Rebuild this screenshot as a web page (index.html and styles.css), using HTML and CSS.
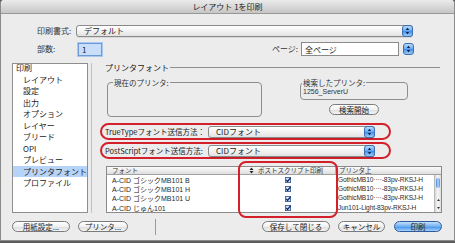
FILE: index.html
```html
<!DOCTYPE html>
<html lang="ja">

<head>
  <meta charset="UTF-8" />
  <title>レイアウト 1を印刷</title>
  <link rel="stylesheet" href="styles.css">
</head>

<body>
  <div class="window">
    <div class="titlebar">レイアウト 1を印刷</div>

    <div class="format-row">
      <span class="label">印刷書式:</span>
      <div class="popup popup-format">
        <span>デフォルト</span>
        <span class="stepper">
          <svg width="11" height="12" viewBox="0 0 11 12"><path d="M3.8 5L7.2 5L5.5 2.8Z M3.8 7L7.2 7L5.5 9.2Z" fill="#102050" /></svg>
        </span>
      </div>
    </div>

    <div class="copies-row">
      <span class="label">部数:</span>
      <div class="copies">1</div>
      <span class="page-label">ページ:</span>
      <div class="page-field">全ページ</div>
      <span class="stepper">
        <svg width="11" height="12" viewBox="0 0 11 12"><path d="M3.8 5L7.2 5L5.5 2.8Z M3.8 7L7.2 7L5.5 9.2Z" fill="#102050" /></svg>
      </span>
    </div>

    <div class="main">
      <div class="sidebar">
        <ul class="nav">
          <li class="nav-parent">印刷</li>
          <li>レイアウト</li>
          <li>設定</li>
          <li>出力</li>
          <li>オプション</li>
          <li>レイヤー</li>
          <li>ブリード</li>
          <li>OPI</li>
          <li>プレビュー</li>
          <li class="selected">プリンタフォント</li>
          <li>プロファイル</li>
        </ul>
      </div>
      <div class="divider"></div>

      <div class="panel">
        <div class="section-title">
          <span>プリンタフォント</span>
          <span class="rule"></span>
        </div>

        <div class="groups">
          <fieldset class="group group-current">
            <legend>現在のプリンタ:</legend>
          </fieldset>
          <div class="search">
            <fieldset class="group group-found">
              <legend>検索したプリンタ:</legend>
              <div class="found-name">1256_ServerU</div>
            </fieldset>
            <div class="button search-button">検索開始</div>
          </div>
        </div>

        <div class="send-row">
          <span class="send-label">TrueTypeフォント送信方法：</span>
          <div class="popup popup-send">
            <span>CIDフォント</span>
            <span class="stepper">
              <svg width="11" height="12" viewBox="0 0 11 12"><path d="M3.8 5L7.2 5L5.5 2.8Z M3.8 7L7.2 7L5.5 9.2Z" fill="#102050" /></svg>
            </span>
          </div>
        </div>
        <div class="send-row">
          <span class="send-label">PostScriptフォント送信方法:</span>
          <div class="popup popup-send">
            <span>CIDフォント</span>
            <span class="stepper">
              <svg width="11" height="12" viewBox="0 0 11 12"><path d="M3.8 5L7.2 5L5.5 2.8Z M3.8 7L7.2 7L5.5 9.2Z" fill="#102050" /></svg>
            </span>
          </div>
        </div>

        <div class="font-table">
          <div class="table-head">
            <div class="th">フォント</div>
            <div class="th th-check">
              <svg width="5" height="7" viewBox="0 0 5 7"><path d="M0.5 3L4.5 3L2.5 0.5Z M0.5 4L4.5 4L2.5 6.5Z" fill="#222" /></svg>
              ポストスクリプト印刷
            </div>
            <div class="th">プリンタ上</div>
          </div>
          <div class="table-body">
            <div class="rows">
              <div class="td">A-CID ゴシックMB101 B</div>
              <div class="td td-check"><span class="check"><svg width="6" height="6" viewBox="0 0 7 7"><rect x="0.5" y="0.5" width="6" height="6" fill="#cfe1f7" stroke="#3a5c94" /><path d="M1.5 3.3L3 5.2L6.4 0.9" fill="none" stroke="#0b2560" stroke-width="1.4" /></svg></span></div>
              <div class="td td-printer">GothicMB10····-83pv-RKSJ-H</div>

              <div class="td">A-CID ゴシックMB101 H</div>
              <div class="td td-check"><span class="check"><svg width="6" height="6" viewBox="0 0 7 7"><rect x="0.5" y="0.5" width="6" height="6" fill="#cfe1f7" stroke="#3a5c94" /><path d="M1.5 3.3L3 5.2L6.4 0.9" fill="none" stroke="#0b2560" stroke-width="1.4" /></svg></span></div>
              <div class="td td-printer">GothicMB10····-83pv-RKSJ-H</div>

              <div class="td">A-CID ゴシックMB101 U</div>
              <div class="td td-check"><span class="check"><svg width="6" height="6" viewBox="0 0 7 7"><rect x="0.5" y="0.5" width="6" height="6" fill="#cfe1f7" stroke="#3a5c94" /><path d="M1.5 3.3L3 5.2L6.4 0.9" fill="none" stroke="#0b2560" stroke-width="1.4" /></svg></span></div>
              <div class="td td-printer">GothicMB10····-83pv-RKSJ-H</div>

              <div class="td">A-CID じゅん101</div>
              <div class="td td-check"><span class="check"><svg width="6" height="6" viewBox="0 0 7 7"><rect x="0.5" y="0.5" width="6" height="6" fill="#cfe1f7" stroke="#3a5c94" /><path d="M1.5 3.3L3 5.2L6.4 0.9" fill="none" stroke="#0b2560" stroke-width="1.4" /></svg></span></div>
              <div class="td td-printer">Jun101-Light-83pv-RKSJ-H</div>
            </div>
            <div class="scrollbar">
              <div class="thumb"></div>
              <div class="arrows">
                <svg width="5" height="14" viewBox="0 0 5 14"><path d="M1 4L4 4L2.5 2Z M1 10L4 10L2.5 12Z" fill="#333" /></svg>
              </div>
            </div>
          </div>
          <div class="highlight"></div>
        </div>
      </div>
    </div>

    <div class="footer">
      <div class="button btn-paper">用紙設定...</div>
      <div class="button btn-printer">プリンタ...</div>
      <div class="footer-sep"></div>
      <div class="button btn-save">保存して閉じる</div>
      <div class="button btn-cancel">キャンセル</div>
      <div class="button btn-print">印刷</div>
    </div>
  </div>
</body>

</html>
```

FILE: styles.css
```css
:root {
  --window: #ececec;
  --line: #8c8c8c;
  --text: #1a1a1a;
  --red: #d3202a;
  --select: #b6d3f8;
}

* {
  box-sizing: border-box;
  margin: 0;
  padding: 0;
}

body {
  width: 455px;
  height: 243px;
  overflow: hidden;
  background-color: #5e5e5e;
  color: var(--text);
  font-family: 'Noto Sans CJK JP', 'Noto Sans', sans-serif;
  font-size: 8px;
  line-height: 1;
}

.window {
  height: 241px;
  display: flex;
  flex-direction: column;
  background-color: var(--window);
  border: 1px solid #8a8a8a;
  border-top: none;
  border-radius: 4px 4px 0 0;
  overflow: hidden;
}

.titlebar {
  flex: none;
  height: 14px;
  line-height: 13px;
  text-align: center;
  font-size: 8px;
  color: #222;
  background: linear-gradient(#ebebeb, #c6c6c6);
  border-bottom: 1px solid #989898;
}

/* top rows */
.format-row,
.copies-row {
  display: flex;
  align-items: center;
  width: 377px;
  margin-left: 36px;
}

.format-row {
  height: 12px;
  margin-top: 11px;
}

.copies-row {
  height: 14px;
  margin-top: 5px;
}

.label {
  width: 36px;
  flex: none;
  color: #333;
}

.popup {
  display: flex;
  align-items: center;
  justify-content: space-between;
  height: 12px;
  padding-left: 7px;
  background: linear-gradient(#ffffff, #f2f2f2 50%, #e2e2e2);
  border: 1px solid #8a8a8a;
  border-radius: 3px;
  box-shadow: 0 1px 0 rgba(0, 0, 0, 0.08);
}

.popup-format {
  margin-left: 3px;
  width: 337px;
}

.stepper {
  flex: none;
  display: block;
  width: 11px;
  height: 12px;
  margin-right: -1px;
  border-radius: 3px;
  border: 1px solid #3c6fb4;
  background: linear-gradient(#b9dcfb, #5ea6f0 50%, #3f8be5 51%, #9ccbf6);
}

.stepper svg {
  display: block;
  margin: -1px 0 0 -1px;
}

.copies {
  width: 24px;
  height: 13px;
  margin-left: 5px;
  padding: 1px 0 0 3px;
  background-color: #c9def8;
  border: 1px solid #6d9ad6;
  box-shadow: 0 0 0 1px #a9c9f1;
  line-height: 9px;
}

.page-label {
  margin-left: auto;
  color: #333;
}

.page-field {
  width: 98px;
  height: 14px;
  margin-left: 3px;
  padding: 2px 0 0 3px;
  background-color: #fff;
  border: 1px solid #8a8a8a;
  line-height: 9px;
}

.copies-row .stepper {
  margin: 0 0 0 4px;
}

/* main */
.main {
  display: flex;
  height: 150px;
  margin-top: 7px;
  padding-left: 11px;
}

.sidebar {
  flex: none;
  width: 76px;
  height: 150px;
  background-color: #fff;
  border: 1px solid #8e8e8e;
  overflow: hidden;
}

.nav {
  list-style: none;
  margin-top: -2px;
}

.nav li {
  height: 11.5px;
  line-height: 11.5px;
  padding-left: 10px;
  color: #222;
}

.nav .nav-parent {
  padding-left: 3px;
}

.nav .selected {
  background-color: var(--select);
}

.divider {
  flex: none;
  width: 1px;
  margin-left: 3px;
  background-color: #c2c2c2;
}

.panel {
  width: 342px;
  margin-left: 8px;
  display: flex;
  flex-direction: column;
}

.section-title {
  display: flex;
  align-items: center;
  height: 10px;
  padding: 0 2px 0 5px;
}

.rule {
  flex: 1;
  height: 1px;
  margin-left: 1px;
  background-color: #8e8e8e;
}

.groups {
  display: flex;
  align-items: flex-start;
  height: 49px;
}

.group {
  border: 1px solid #8e8e8e;
  border-radius: 4px;
}

.group legend {
  height: 8px;
  font-size: 7.5px;
  line-height: 8px;
  padding: 0 1px;
  margin-left: 5px;
  color: #333;
}

.group-current {
  width: 155px;
  height: 38px;
  margin: 6px 0 0 7px;
}

.search {
  display: flex;
  flex-direction: column;
  align-items: center;
  margin: 6px 0 0 38px;
}

.group-found {
  width: 108px;
  height: 21px;
}

.group-found legend {
  margin-left: 1px;
}

.found-name {
  padding: 1px 0 0 2px;
  font-family: 'Liberation Sans', sans-serif;
  font-size: 7px;
  line-height: 7px;
  color: #333;
}

.button {
  display: flex;
  align-items: center;
  justify-content: center;
  height: 11px;
  font-size: 7.5px;
  color: #222;
  border: 1px solid #7a7a7a;
  border-radius: 6px;
  background: linear-gradient(#ffffff, #f1f1f1 50%, #dcdcdc 51%, #f4f4f4);
}

.search-button {
  width: 50px;
  margin-top: 4px;
}

.send-row {
  display: flex;
  align-items: center;
  width: 291px;
  height: 17px;
  margin-top: 2px;
  padding-left: 3px;
  border: 2px solid var(--red);
  border-radius: 9px;
}

.send-row:first-of-type {
  margin-top: 4px;
}

.send-label {
  width: 103px;
  flex: none;
  font-size: 7.5px;
  white-space: nowrap;
}

.popup-send {
  width: 167px;
}

/* font table */
.font-table {
  position: relative;
  width: 336px;
  height: 47px;
  margin: 7px 0 0 6px;
  background-color: #fff;
  border: 1px solid #8a8a8a;
}

.table-head {
  display: grid;
  grid-template-columns: 133px 96px 1fr;
  height: 8px;
  background: linear-gradient(#fbfbfb, #dedede);
  border-bottom: 1px solid #a0a0a0;
}

.th {
  display: flex;
  align-items: center;
  gap: 4px;
  padding-left: 5px;
  font-size: 6.5px;
  color: #333;
  border-right: 1px solid #b0b0b0;
  white-space: nowrap;
}

.th:last-child {
  border-right: none;
  padding-left: 3px;
}

.th-check {
  padding-left: 9px;
}

.table-body {
  display: flex;
  height: 37px;
}

.rows {
  flex: 1;
  display: grid;
  grid-template-columns: 133px 96px 1fr;
  grid-auto-rows: 9.3px;
  padding-top: 0.5px;
}

.td {
  display: flex;
  align-items: center;
  padding-left: 5px;
  font-family: 'Liberation Sans', 'Noto Sans CJK JP', sans-serif;
  font-size: 7px;
  color: #2a2a2a;
  white-space: nowrap;
  overflow: hidden;
}

.td-check {
  justify-content: center;
  padding-left: 0;
}

.check svg {
  display: block;
}

.td-printer {
  padding-left: 2px;
  font-size: 6.6px;
  letter-spacing: -0.1px;
}

.scrollbar {
  flex: none;
  display: flex;
  flex-direction: column;
  justify-content: space-between;
  width: 7px;
  padding: 3px 0 1px;
  background: linear-gradient(to right, #d8d8d8, #f6f6f6, #dcdcdc);
  border-left: 1px solid #b8b8b8;
}

.thumb {
  height: 10px;
  margin: 0 1px;
  border-radius: 3px;
  background: linear-gradient(to right, #3f86de, #b7d8fa, #4d92e4);
}

.arrows svg {
  display: block;
  margin-left: 0.5px;
}

.highlight {
  position: absolute;
  left: 131px;
  top: -6px;
  width: 100px;
  height: 57px;
  border: 2px solid var(--red);
  border-radius: 8px;
}

/* footer */
.footer {
  display: flex;
  align-items: center;
  height: 19px;
  margin-top: 4px;
  padding: 0 12px 0 11px;
}

.btn-paper {
  width: 58px;
}

.btn-printer {
  width: 50px;
  margin-left: 8px;
}

.footer-sep {
  width: 1px;
  height: 16px;
  margin-left: 27px;
  background-color: #9a9a9a;
}

.btn-save {
  width: 68px;
  margin-left: auto;
}

.btn-cancel {
  width: 47px;
  margin-left: 8px;
}

.btn-print {
  width: 48px;
  margin-left: 9px;
  border-color: #2f5b9c;
  background: linear-gradient(#c3e0fb, #6eaef0 50%, #3f8ee8 51%, #a6d3fa);
}
```
